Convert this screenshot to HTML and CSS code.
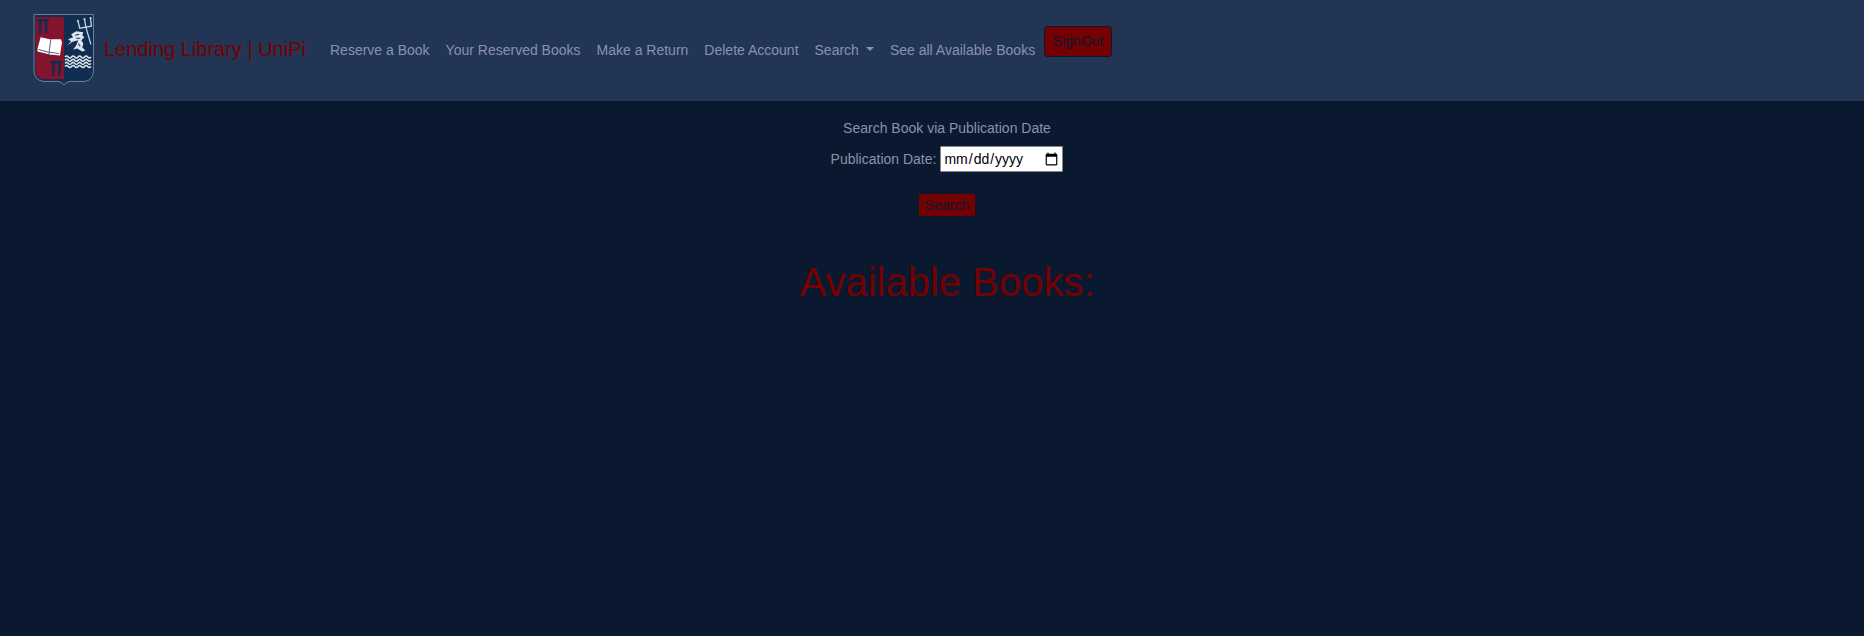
FILE: index.html
```html
<!DOCTYPE html>
<html lang="en">
<head>
<meta charset="utf-8">
<title>Lending Library | UniPi</title>
<link rel="stylesheet" href="styles.css">
</head>
<body>
<nav class="navbar">
  <a class="brand">
    <svg class="crest" width="62" height="74" viewBox="0.5 0 61 73" preserveAspectRatio="none">
      <path d="M1 1H60V58Q60 67 51 67H37Q33 68 31 71Q29 68 25 67H11Q2 67 1 58Z" fill="#0f2e52"/>
      <path d="M3 4H31V65H12Q4 65 3 58Z" fill="#85132e"/>
      <path d="M5 7.500H16M7.500 7V21M13.500 7V20M18 48.500H29M20.500 48V62M26.500 48V62" fill="none" stroke="#112c50" stroke-width="2.600"/>
      <path d="M1.500 58V1.500H60V58Q59 67 51 67.500H37Q33 68 31 71Q29 68 25 67.500H11Q3 67 1.500 58Z" fill="none" stroke="#8195aa" stroke-width=".8"/>
      <path d="M8 24L17 26L28 26L29 29L27 42L17 41L5 38V35Z" fill="#fff"/>
      <path d="M18 26L16 41M6 36L15 38.500L26 40" fill="none" stroke="#52677f" stroke-width="1"/>
      <path d="M38 21L43 18L50 19L49 22L51 24L48 27L50 30L49 34L52 37L49 38L44 35L40 36L43 32L45 27L40 28L34 32L38 28L35 26L40 24Z" fill="#dfe7ee"/>
      <path d="M42 22L46 21M43 25L47 25M38 30L41 29M37 33L40 32M45 30L47 33" stroke="#173655" stroke-width="1"/>
      <path d="M44.500 7L46.500 15L58 13L57 4M51 5L52.500 14L57.500 31" fill="none" stroke="#c5d1dc" stroke-width="1.300"/>
      <path d="M44 9L44.500 7L46 8M50.500 7L51 5L52.500 6.500M56.500 6L57 4L58.500 5.500" fill="none" stroke="#c5d1dc" stroke-width=".8"/>
      <path d="M32 43.500q1.600-2 3.200 0t3.200 0t3.200 0t3.200 0t3.200 0t3.200 0t3.200 0t3.200 0M32 46.600q1.600-2 3.200 0t3.200 0t3.200 0t3.200 0t3.200 0t3.200 0t3.200 0t3.200 0M32 49.700q1.600-2 3.200 0t3.200 0t3.200 0t3.200 0t3.200 0t3.200 0t3.200 0t3.200 0M32 52.800q1.600-2 3.200 0t3.200 0t3.200 0t3.200 0t3.200 0t3.200 0t3.200 0t3.200 0" fill="none" stroke="#dce5ec" stroke-width="1.500"/>
    </svg>
    <span class="brand-name">Lending Library | UniPi</span>
  </a>
  <div class="links">
    <a>Reserve a Book</a>
    <a>Your Reserved Books</a>
    <a>Make a Return</a>
    <a>Delete Account</a>
    <a class="dropdown">Search</a>
    <a>See all Available Books</a>
  </div>
  <button class="signout">SignOut</button>
</nav>
<main>
  <form class="search">
    <div class="title">Search Book via Publication Date</div>
    <div class="field">
      <label for="date">Publication Date:</label>
      <input id="date" type="date">
    </div>
    <button class="submit" type="button">Search</button>
  </form>
  <h1>Available Books:</h1>
</main>
</body>
</html>
```
FILE: styles.css
```css
* { box-sizing: border-box; }
body {
  margin: 0;
  min-height: 100vh;
  background: #0a192f;
  color: #8892b0;
  font: 14px/21px "Liberation Sans", Arial, sans-serif;
}
.navbar {
  display: flex;
  align-items: flex-start;
  height: 101px;
  padding: 13px 33px 0;
  background: #233554;
}
.brand { display: flex; width: 297px; gap: 9px; color: #740001; }
.crest { flex: none; }
.brand-name { font-size: 20px; line-height: 30px; padding-top: 21px; white-space: nowrap; }
.links { display: flex; gap: 16px; padding-top: 27px; white-space: nowrap; }
.dropdown::after {
  content: "";
  display: inline-block;
  margin-left: 7px;
  vertical-align: 4px;
  border-top: 4px solid;
  border-left: 4px solid transparent;
  border-right: 4px solid transparent;
}
.signout {
  width: 68px;
  height: 31px;
  margin: 13px 0 0 9px;
  padding: 0;
  border: 1px solid #0a192f;
  border-radius: 3px;
  background: #740001;
  color: #0a192f;
  font: 14px/21px "Liberation Sans", Arial, sans-serif;
}
main { padding-top: 16px; text-align: center; }
.search {
  height: 101px;
  margin-left: 3px;
  border: 1px solid #0a172a;
  border-right: 0;
  border-radius: 4px 0 0 4px;
  padding-left: 26px;
}
.title { line-height: 21px; }
.field { display: flex; justify-content: center; align-items: flex-start; gap: 4px; height: 25px; margin: 7px 0 23px; }
.field label { padding-top: 3px; }
.field input {
  width: 123px;
  height: 26px;
  padding: 1px 2px;
  border: 1px solid #858585;
  border-radius: 1px;
  font: 14px "Liberation Sans", Arial, sans-serif;
}
.field input::-webkit-calendar-picker-indicator { width: 15px; height: 15px; padding: 1px; }
.submit {
  display: block;
  width: 56px;
  height: 22px;
  margin: 0 auto;
  padding: 0;
  border: 0;
  background: #740001;
  color: #0a192f;
  font: 14px/22px "Liberation Sans", Arial, sans-serif;
}
h1 { margin: 40px 0 0; padding-left: 30px; color: #740001; font-size: 40px; font-weight: 400; line-height: 48px; }
```
